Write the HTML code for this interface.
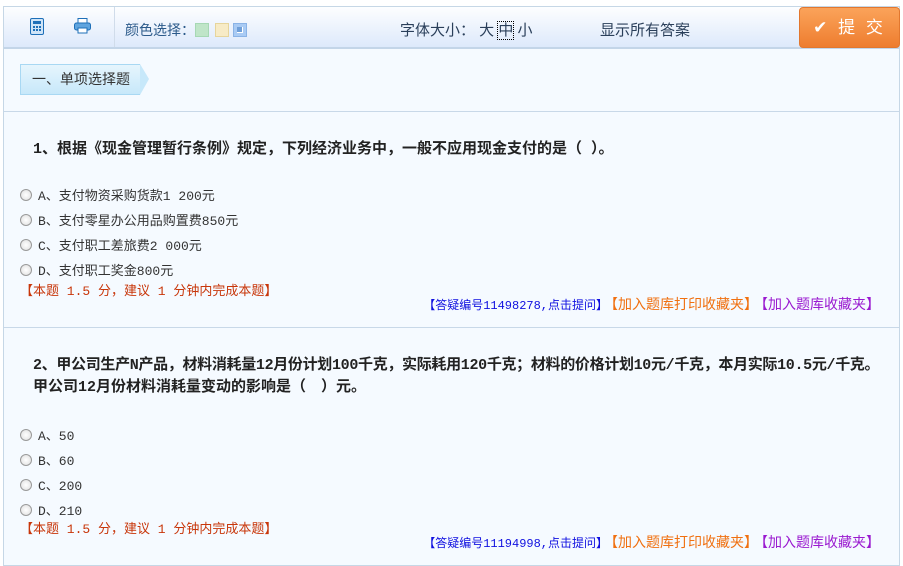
<!DOCTYPE html>
<html><head><meta charset="utf-8">
<style>
*{margin:0;padding:0;box-sizing:border-box}
body{width:903px;height:561px;overflow:hidden;background:#fff;font-family:"Liberation Sans","Noto Sans CJK SC",sans-serif;position:relative}
.wrap{position:absolute;left:3px;top:6px;width:897px;height:560px;border:1px solid #c6d7e6;background:#f5faff}
.hdr{position:absolute;left:0;top:0;width:895px;height:42px;background:linear-gradient(#fdfeff,#dde9fb);border-bottom:2px solid #c3d5e8}
.sep{position:absolute;left:110px;top:0;width:1px;height:40px;background:#d0dcea}
.t{position:absolute;font-size:14px;color:#2a3f5a;white-space:nowrap}
.sw{position:absolute;top:16px;width:14px;height:14px}
.btn{position:absolute;left:795px;top:0;width:101px;height:41px;background:linear-gradient(#fba35a,#ee7d2f);border:1px solid #e2772e;border-radius:4px;color:#fff;font-size:17px;letter-spacing:3px;line-height:39px;text-align:center}
.tag{position:absolute;left:16px;top:57px;width:120px;height:31px;background:linear-gradient(#e6f5fd,#c7e8fa);border:1px solid #a8d8f3;border-right:none;font-size:14px;color:#333;line-height:29px;padding-left:11px}
.tag:after{content:"";position:absolute;right:-9px;top:-1px;border-left:9px solid #c7e8fa;border-top:15px solid transparent;border-bottom:16px solid transparent}
.hl{position:absolute;left:0;width:895px;height:1px;background:#c8d8e8}
.q{position:absolute;left:29px;font-size:15px;font-weight:bold;color:#222;white-space:nowrap;font-family:"Liberation Mono","Noto Sans CJK SC",monospace}
.o{position:absolute;left:16px;font-size:13px;color:#333;white-space:nowrap;font-family:"Liberation Mono","Noto Sans CJK SC",monospace}
.o i{display:inline-block;width:12px;height:12px;border-radius:50%;border:1px solid #9a9a9a;background:radial-gradient(#fff,#ddd);vertical-align:-1px;margin-right:6px}
.red{position:absolute;left:16px;font-size:13px;color:#c8360a;white-space:nowrap;font-family:"Liberation Mono","Noto Sans CJK SC",monospace}
.lk{position:absolute;right:19px;white-space:nowrap;font-size:14px;font-family:"Liberation Mono","Noto Sans CJK SC",monospace}
.lk .b{color:#1010e0;font-size:12px}.lk .or{color:#f07010;margin-left:3px}.lk .p{color:#9a1ad0;margin-left:3px}
</style></head><body>
<div class="wrap">
 <div class="hdr">
  <svg style="position:absolute;left:26px;top:11px" width="14" height="17" viewBox="0 0 14 17"><rect x="0.5" y="0.5" width="13" height="16" rx="1.5" fill="#cfe4f7" stroke="#1d6fb8"/><rect x="3" y="3" width="8" height="3" fill="#1d6fb8"/><g fill="#1d6fb8"><rect x="3" y="8" width="2" height="2"/><rect x="6" y="8" width="2" height="2"/><rect x="9" y="8" width="2" height="2"/><rect x="3" y="11" width="2" height="2"/><rect x="6" y="11" width="2" height="2"/><rect x="9" y="11" width="2" height="2"/></g></svg>
  <svg style="position:absolute;left:70px;top:11px" width="17" height="16" viewBox="0 0 17 16"><rect x="4" y="0.5" width="9" height="5" fill="#fff" stroke="#1d6fb8"/><rect x="0.5" y="5" width="16" height="7" rx="2" fill="#5fa4de" stroke="#1d6fb8"/><rect x="4" y="10" width="9" height="5" fill="#fff" stroke="#1d6fb8"/></svg>
  <div class="sep"></div>
  <div class="t" style="left:121px;top:13px;color:#2b5a8a">颜色选择：</div>
  <div class="sw" style="left:191px;background:#bfe5c8;border:1px solid #a6d8b4"></div>
  <div class="sw" style="left:211px;background:#f7ebc6;border:1px solid #e6d59c"></div>
  <div class="sw" style="left:229px;background:#a9cbf4;border:1px solid #8ab3e6"><div style="margin:3px;width:6px;height:6px;background:#6f9fd8;border-right:1px solid #fff;border-bottom:1px solid #fff"></div></div>
  <div class="t" style="left:396px;top:12px;font-size:15px">字体大小：&nbsp;大 <span style="outline:1px dotted #000">中</span> 小</div>
  <div class="t" style="left:596px;top:12px;font-size:15px">显示所有答案</div>
 </div>
 <div class="btn">✔ 提 交</div>
 <div class="tag">一、单项选择题</div>
 <div class="hl" style="top:104px"></div>
 <div class="q" style="top:130px">1、根据《现金管理暂行条例》规定，下列经济业务中，一般不应用现金支付的是（ ）。</div>
 <div class="o" style="top:178px"><i></i>A、支付物资采购货款1 200元</div>
 <div class="o" style="top:203px"><i></i>B、支付零星办公用品购置费850元</div>
 <div class="o" style="top:228px"><i></i>C、支付职工差旅费2 000元</div>
 <div class="o" style="top:253px"><i></i>D、支付职工奖金800元</div>
 <div class="red" style="top:273px">【本题 1.5 分，建议 1 分钟内完成本题】</div>
 <div class="lk" style="top:287px"><span class="b">【答疑编号11498278,点击提问】</span><span class="or">【加入题库打印收藏夹】</span><span class="p">【加入题库收藏夹】</span></div>
 <div class="hl" style="top:320px"></div>
 <div class="q" style="top:346px;letter-spacing:-0.32px">2、甲公司生产N产品，材料消耗量12月份计划100千克，实际耗用120千克；材料的价格计划10元/千克，本月实际10.5元/千克。</div>
 <div class="q" style="top:368px">甲公司12月份材料消耗量变动的影响是（　）元。</div>
 <div class="o" style="top:418px"><i></i>A、50</div>
 <div class="o" style="top:443px"><i></i>B、60</div>
 <div class="o" style="top:468px"><i></i>C、200</div>
 <div class="o" style="top:493px"><i></i>D、210</div>
 <div class="red" style="top:511px">【本题 1.5 分，建议 1 分钟内完成本题】</div>
 <div class="lk" style="top:525px"><span class="b">【答疑编号11194998,点击提问】</span><span class="or">【加入题库打印收藏夹】</span><span class="p">【加入题库收藏夹】</span></div>
</div>
</body></html>
